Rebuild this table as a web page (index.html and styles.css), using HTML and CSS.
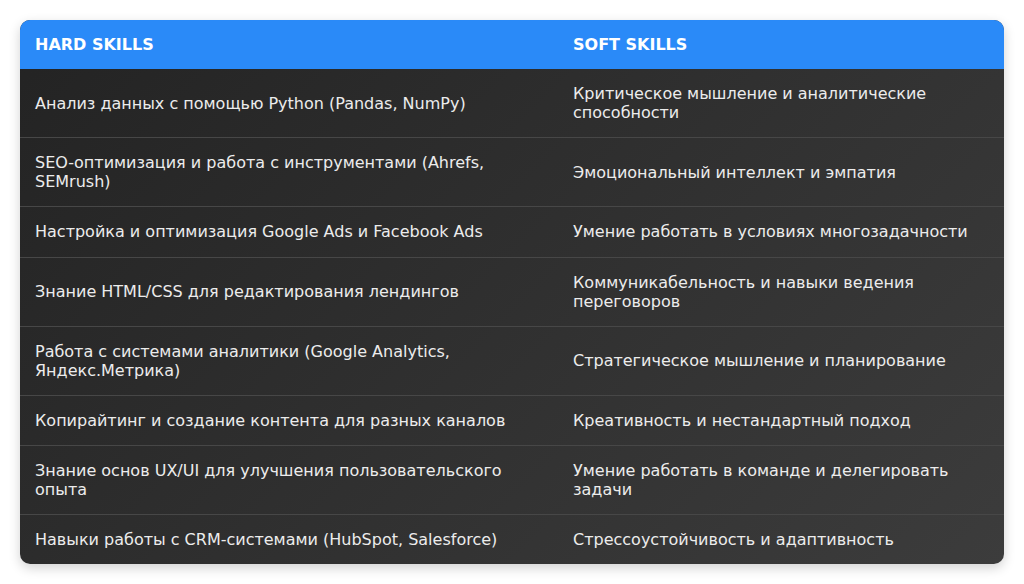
FILE: index.html
```html
<!DOCTYPE html>
<html lang="ru">
<head>
<meta charset="utf-8">
<link rel="stylesheet" href="styles.css">
</head>
<body>
<table class="skills">
  <thead>
    <tr><th class="col-hard">HARD SKILLS</th><th>SOFT SKILLS</th></tr>
  </thead>
  <tbody>
    <tr><td>Анализ данных с помощью Python (Pandas, NumPy)</td><td>Критическое мышление и аналитические способности</td></tr>
    <tr><td>SEO-оптимизация и работа с инструментами (Ahrefs, SEMrush)</td><td>Эмоциональный интеллект и эмпатия</td></tr>
    <tr><td>Настройка и оптимизация Google Ads и Facebook Ads</td><td>Умение работать в условиях многозадачности</td></tr>
    <tr><td>Знание HTML/CSS для редактирования лендингов</td><td>Коммуникабельность и навыки ведения переговоров</td></tr>
    <tr><td>Работа с системами аналитики (Google Analytics, Яндекс.Метрика)</td><td>Стратегическое мышление и планирование</td></tr>
    <tr><td>Копирайтинг и создание контента для разных каналов</td><td>Креативность и нестандартный подход</td></tr>
    <tr><td>Знание основ UX/UI для улучшения пользовательского опыта</td><td>Умение работать в команде и делегировать задачи</td></tr>
    <tr><td>Навыки работы с CRM-системами (HubSpot, Salesforce)</td><td>Стрессоустойчивость и адаптивность</td></tr>
  </tbody>
</table>
</body>
</html>
```
FILE: styles.css
```css
html, body {
  margin: 0;
  background: #ffffff;
}
body {
  padding: 20px;
  font-family: "DejaVu Sans", sans-serif;
}
.skills {
  width: 100%;
  border-collapse: collapse;
  border-radius: 10px;
  overflow: hidden;
  background: linear-gradient(135deg, #232323 0%, #3c3c3c 100%);
  box-shadow: 0 4px 12px rgba(0, 0, 0, 0.18);
  color: #ececec;
  font-size: 16px;
  line-height: 19.1px;
}
.skills th {
  background: #2a8af8;
  color: #ffffff;
  font-weight: bold;
  text-align: left;
  padding: 15px;
}
.skills .col-hard {
  width: 508px;
}
.skills td {
  padding: 15px;
  vertical-align: middle;
  border-top: 1px solid #474747;
}
.skills tbody tr:first-child td {
  border-top: none;
}
```
